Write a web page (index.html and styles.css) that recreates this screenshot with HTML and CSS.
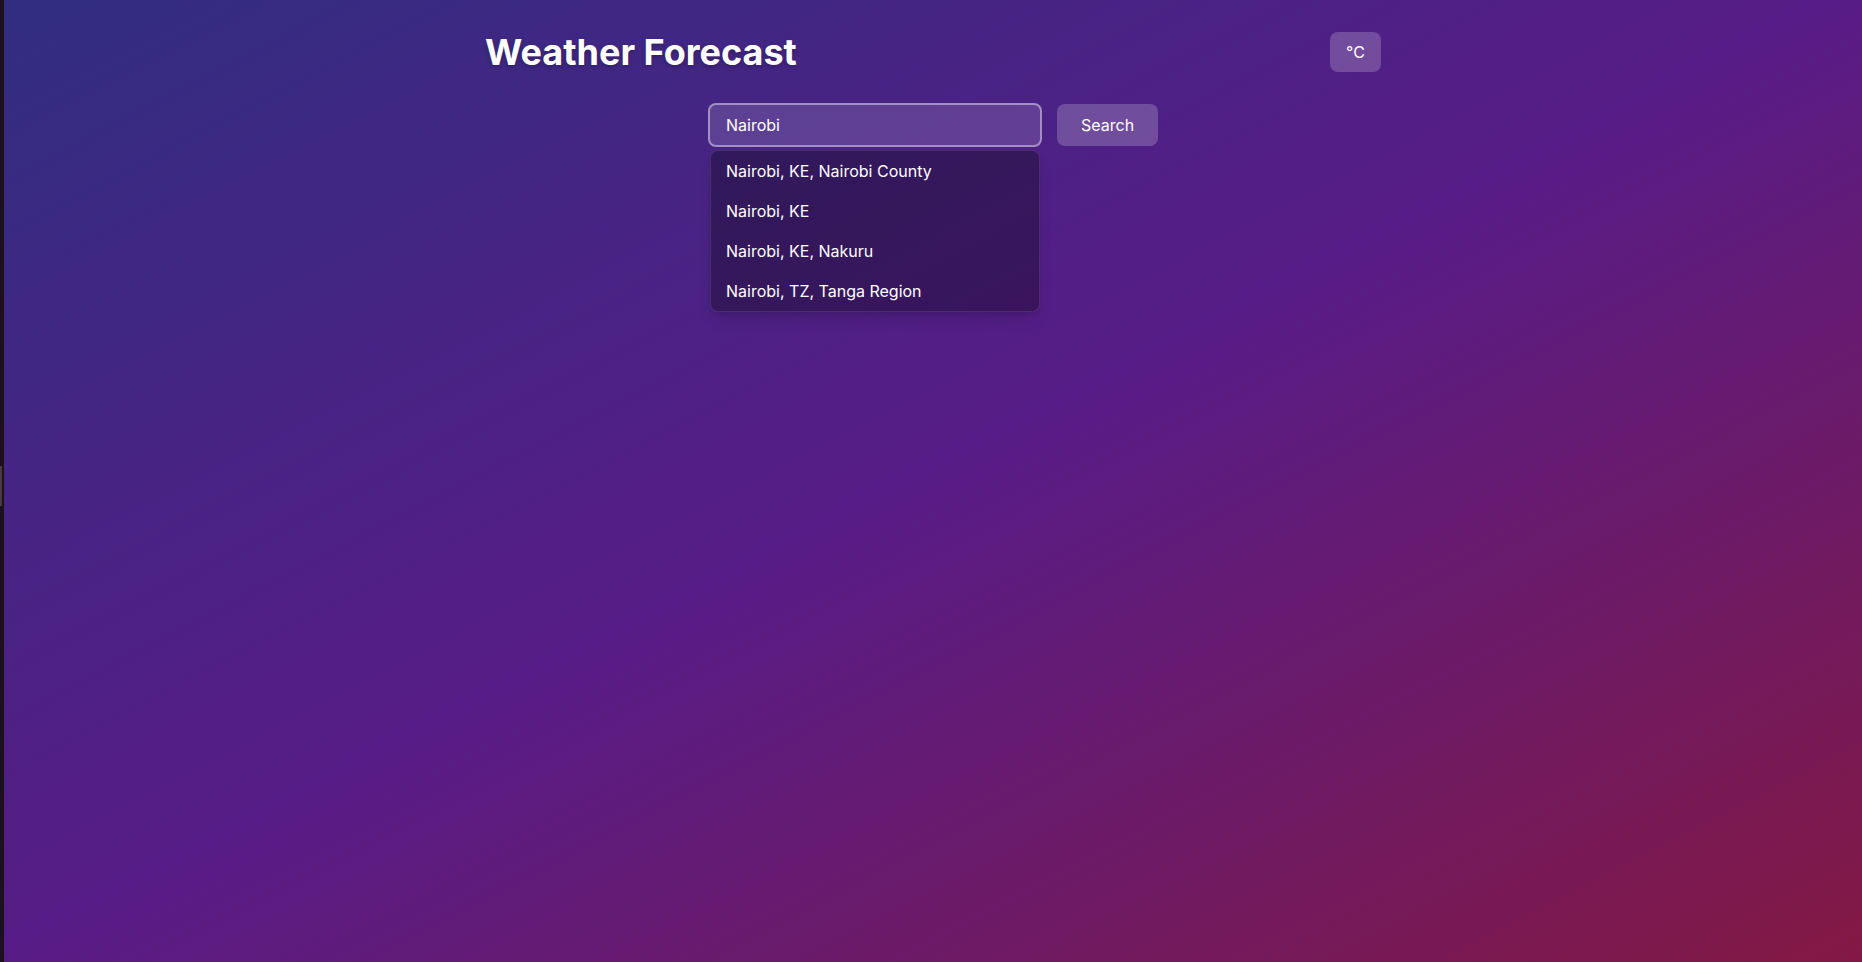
FILE: index.html
```html
<!DOCTYPE html>
<html lang="en">
<head>
<meta charset="utf-8">
<title>Weather Forecast</title>
<link rel="stylesheet" href="styles.css">
</head>
<body>
<div class="edge"><span class="edge-mark"></span></div>
<main class="page">
  <div class="container">
    <header class="header">
      <h1 class="title">Weather Forecast</h1>
      <button class="unit-btn" type="button">°C</button>
    </header>
    <form class="search">
      <div class="search-field">
        <input class="search-input" type="text" value="Nairobi">
        <ul class="suggestions">
          <li class="suggestion">Nairobi, KE, Nairobi County</li>
          <li class="suggestion">Nairobi, KE</li>
          <li class="suggestion">Nairobi, KE, Nakuru</li>
          <li class="suggestion">Nairobi, TZ, Tanga Region</li>
        </ul>
      </div>
      <button class="search-btn" type="button">Search</button>
    </form>
  </div>
</main>
</body>
</html>
```

FILE: styles.css
```css
* { box-sizing: border-box; }
html, body { height: 100%; }
body {
  margin: 0;
  display: flex;
  font-family: Inter, "Noto Sans", sans-serif;
  color: #fff;
  background: #1d1120;
  overflow: hidden;
}
.edge {
  width: 4px;
  flex: none;
  background: #1d1120;
  position: relative;
}
.edge-mark {
  position: absolute;
  left: 0;
  top: 466px;
  width: 2px;
  height: 40px;
  background: #4a3a3a;
}
.page {
  flex: 1;
  min-height: 100%;
  background: linear-gradient(to bottom right, #312e81 0%, #581c87 50%, #831843 100%);
  padding: 32px 0;
}
.container {
  width: 896px;
  margin: 0 auto;
}
.header {
  display: flex;
  justify-content: space-between;
  align-items: flex-start;
  margin-bottom: 31px;
}
.title {
  margin: 0;
  font-size: 36px;
  line-height: 40px;
  font-weight: 700;
  text-shadow: 0 2px 4px rgba(0, 0, 0, 0.25);
}
.unit-btn {
  font-family: inherit;
  font-size: 16px;
  line-height: 24px;
  color: #fff;
  background: rgba(255, 255, 255, 0.2);
  border: 0;
  border-radius: 8px;
  padding: 8px 16px;
  width: 51px;
}
.search {
  display: flex;
  justify-content: center;
  align-items: center;
  gap: 15px;
  margin: 0;
}
.search-field {
  position: relative;
  width: 334px;
}
.search-input {
  display: block;
  width: 100%;
  font-family: inherit;
  font-size: 16px;
  line-height: 24px;
  height: 44px;
  padding: 8px 16px;
  color: #fff;
  background: rgba(255, 255, 255, 0.13);
  border: 2px solid rgba(255, 255, 255, 0.42);
  border-radius: 8px;
  outline: none;
}
.search-btn {
  font-family: inherit;
  font-size: 16px;
  line-height: 24px;
  height: 42px;
  padding: 0 24px;
  width: 101px;
  color: #fff;
  background: rgba(255, 255, 255, 0.2);
  border: 0;
  border-radius: 8px;
}
.suggestions {
  position: absolute;
  left: 2px;
  top: 47px;
  width: 330px;
  margin: 0;
  padding: 0;
  list-style: none;
  background: rgba(0, 0, 0, 0.3);
  border: 1px solid rgba(255, 255, 255, 0.1);
  border-radius: 8px;
  box-shadow: 0 10px 15px -3px rgba(0, 0, 0, 0.12), 0 4px 6px -4px rgba(0, 0, 0, 0.12);
  overflow: hidden;
}
.suggestion {
  font-size: 16px;
  line-height: 24px;
  padding: 8px 15px;
  color: #fff;
}
```
